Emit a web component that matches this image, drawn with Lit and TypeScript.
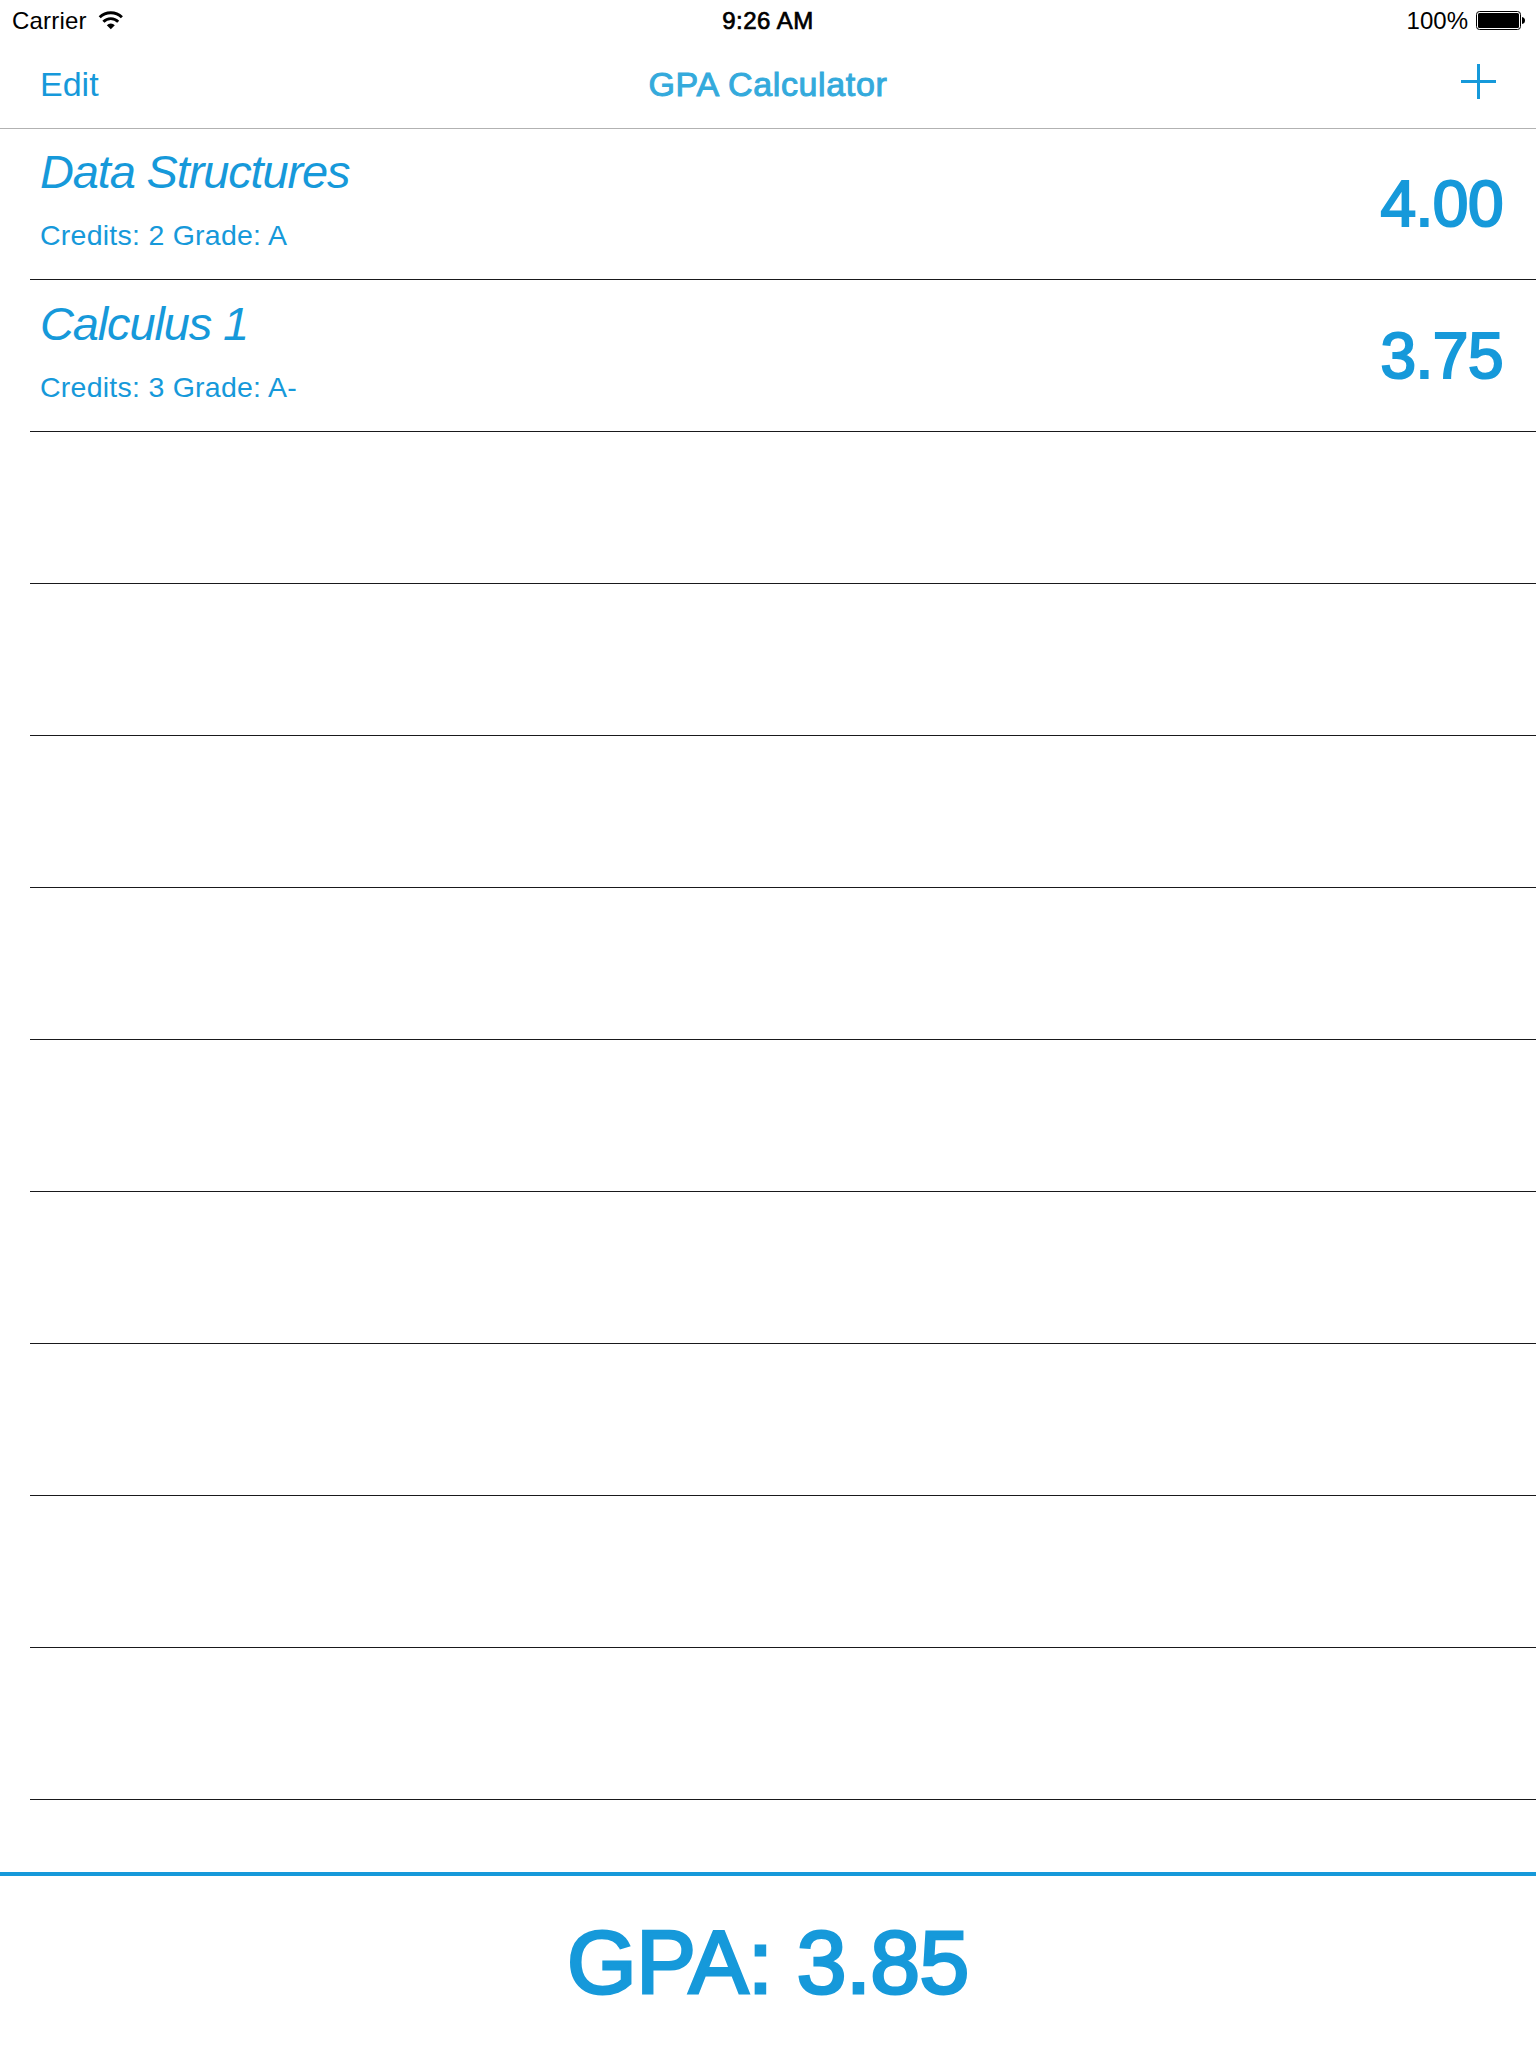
import { LitElement, html, css, svg } from "lit";
import { customElement, property } from "lit/decorators.js";

interface Course {
  name: string;
  credits: number;
  grade: string;
  points: string;
}

const COURSES: Course[] = [
  { name: "Data Structures", credits: 2, grade: "A", points: "4.00" },
  { name: "Calculus 1", credits: 3, grade: "A-", points: "3.75" },
];
const EMPTY_ROWS = 9;

const wifiIcon = svg`
  <g fill="none" stroke="#000" stroke-width="2.9">
    <path d="M1.7 6.3 A15.8 15.8 0 0 1 23.9 6.3" />
    <path d="M5.4 10.7 A10.4 10.4 0 0 1 20.2 10.7" />
  </g>
  <path d="M8.8 14.2 A5.6 5.6 0 0 1 16.8 14.2 L12.8 18.2 Z" />`;

@customElement("status-bar")
export class StatusBar extends LitElement {
  static styles = css`
    :host {
      display: grid;
      grid-template-columns: 1fr auto 1fr;
      height: 40px;
      line-height: 42px;
      font-size: 24px;
      color: #000;
    }
    .left, .right { display: flex; }
    .left { padding-left: 12px; letter-spacing: 0.2px; }
    .right { justify-content: flex-end; padding-right: 11px; }
    .time { -webkit-text-stroke: 0.7px #000; letter-spacing: 0.5px; }
    .wifi { margin: 11px 0 0 11px; }
    .battery { margin: 11px 0 0 8px; }
  `;
  render() {
    return html`
      <div class="left">
        <span>Carrier</span>
        <svg class="wifi" width="25" height="19" viewBox="0 0 25 19">${wifiIcon}</svg>
      </div>
      <span class="time">9:26 AM</span>
      <div class="right">
        <span>100%</span>
        <svg class="battery" width="49" height="19" viewBox="0 0 49 19">
          <rect x="0.5" y="0.5" width="44" height="18" rx="3" fill="none" stroke="#000" />
          <rect x="2" y="2" width="41" height="15" rx="1.5" />
          <path d="M46 6 Q49 6.5 49 9.5 Q49 12.5 46 13 Z" />
        </svg>
      </div>`;
  }
}

@customElement("nav-bar")
export class NavBar extends LitElement {
  static styles = css`
    :host {
      display: grid;
      grid-template-columns: 1fr auto 1fr;
      height: 88px;
      line-height: 88px;
      font-size: 34px;
      color: #1699da;
      border-bottom: 1px solid #b2b2b2;
    }
    .edit { padding-left: 40px; }
    .title { color: #34aadc; -webkit-text-stroke: 1px #34aadc; letter-spacing: 0.65px; }
    .add { justify-self: end; margin: 24px 40px 0 0; }
  `;
  render() {
    return html`
      <span class="edit">Edit</span>
      <span class="title">GPA Calculator</span>
      <svg class="add" width="35" height="35" viewBox="0 0 35 35">
        <path d="M16 0h3v16h16v3H19v16h-3V19H0v-3h16z" fill="#1699da" />
      </svg>`;
  }
}

@customElement("course-row")
export class CourseRow extends LitElement {
  @property({ attribute: false }) course?: Course;
  static styles = css`
    :host {
      display: flex;
      justify-content: space-between;
      box-sizing: border-box;
      height: 152px;
      margin-left: 30px;
      padding: 0 33px 0 10px;
      border-bottom: 1px solid #19191b;
      color: #1699da;
    }
    .name { font-size: 47px; font-style: italic; line-height: 54px; padding-top: 17px; letter-spacing: -1.15px; }
    .detail { font-size: 28.5px; line-height: 32px; padding-top: 20px; letter-spacing: 0.25px; }
    .points { font-size: 64px; line-height: 72px; padding-top: 40px; letter-spacing: -0.5px; -webkit-text-stroke: 2.2px #1699da; }
  `;
  render() {
    const c = this.course;
    if (!c) return html``;
    return html`
      <div>
        <div class="name">${c.name}</div>
        <div class="detail">Credits: ${c.credits} Grade: ${c.grade}</div>
      </div>
      <div class="points">${c.points}</div>`;
  }
}

@customElement("app-root")
export class AppRoot extends LitElement {
  static styles = css`
    :host {
      display: flex;
      flex-direction: column;
      width: 1536px;
      height: 2048px;
      overflow: hidden;
      background: #fff;
      font-family: "Liberation Sans", Arial, sans-serif;
      white-space: nowrap;
    }
    .list { flex: 1; min-height: 0; overflow: hidden; margin-top: -1px; }
    .summary {
      height: 172px;
      border-top: 4px solid #1699da;
      text-align: center;
      font-size: 89.5px;
      line-height: 172px;
      letter-spacing: -0.5px;
      color: #1699da;
      -webkit-text-stroke: 3px #1699da;
    }
  `;
  render() {
    return html`
      <status-bar></status-bar>
      <nav-bar></nav-bar>
      <div class="list">
        ${COURSES.map((c) => html`<course-row .course=${c}></course-row>`)}
        ${Array.from({ length: EMPTY_ROWS }, () => html`<course-row></course-row>`)}
      </div>
      <div class="summary">GPA: 3.85</div>`;
  }
}
